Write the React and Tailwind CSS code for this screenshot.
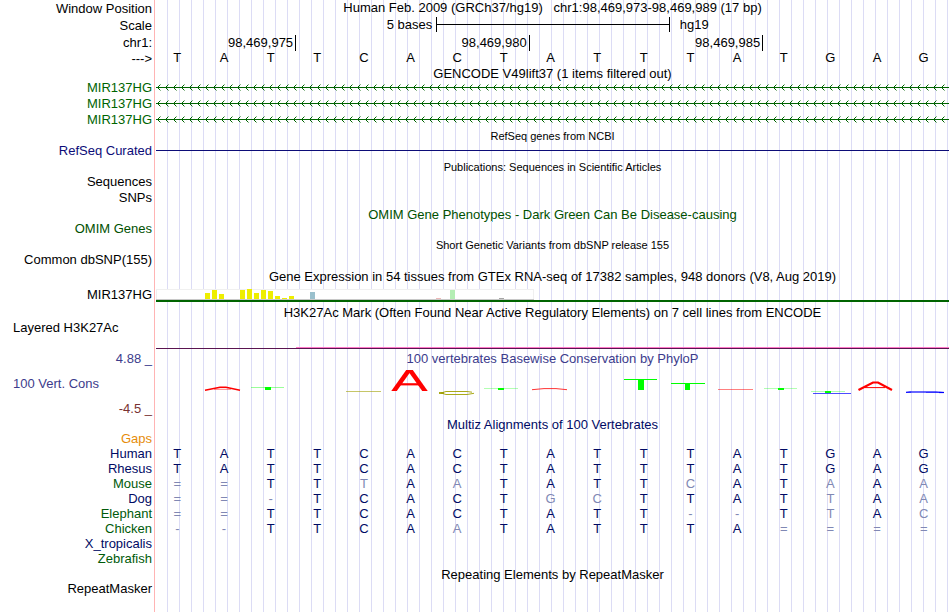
import React from 'react';
import clsx from 'clsx';

const NAVY = 'text-[#000a64]';
const GREEN = 'text-[#005a0a]';

const REFERENCE = 'TATTCACTATTTATGAG';

// lower case = base that differs from the human sequence
const ALIGNMENTS = [
  { species: 'Human', color: NAVY, bases: 'TATTCACTATTTATGAG' },
  { species: 'Rhesus', color: NAVY, bases: 'TATTCACTATTTATGAG' },
  { species: 'Mouse', color: GREEN, bases: '==TTtAaTATTcATaAa' },
  { species: 'Dog', color: NAVY, bases: '==-TCACTgcTTATtAa' },
  { species: 'Elephant', color: GREEN, bases: '==TTCACTATT--TtAc' },
  { species: 'Chicken', color: GREEN, bases: '--TTCAaTATTTA====' },
  { species: 'X_tropicalis', color: NAVY, bases: '' },
  { species: 'Zebrafish', color: GREEN, bases: '' },
];

// GTEx tissues with visible expression, keyed by tissue slot
const TISSUE_COUNT = 54;
const EXPRESSION = {
  7: { height: 6, color: 'bg-[#eeee00]' },
  8: { height: 9, color: 'bg-[#eeee00]' },
  9: { height: 5, color: 'bg-[#eeee00]' },
  12: { height: 9, color: 'bg-[#eeee00]' },
  13: { height: 10, color: 'bg-[#eeee00]' },
  14: { height: 6, color: 'bg-[#eeee00]' },
  15: { height: 9, color: 'bg-[#eeee00]' },
  16: { height: 8, color: 'bg-[#eeee00]' },
  17: { height: 3, color: 'bg-[#eeee00]' },
  18: { height: 1, color: 'bg-[#eeee00]' },
  19: { height: 3, color: 'bg-[#eeee00]' },
  22: { height: 7, color: 'bg-[#9ac0cd]' },
  40: { height: 1, color: 'bg-[#eeb8b8]' },
  42: { height: 9, color: 'bg-[#b4eeb4]' },
  49: { height: 1, color: 'bg-[#a6a6a6]' },
};

const Row = ({ label, labelClass, height, children, className }) => (
  <div className={clsx('flex', height)}>
    <div className={clsx('flex w-[154px] shrink-0 items-center justify-end pr-[2px] whitespace-pre', labelClass)}>
      {label}
    </div>
    <div className="mr-px flex min-w-0 flex-1 border-l border-[#ffb4b4] pl-px">
      <div
        className={clsx(
          'min-w-0 flex-1 bg-[repeating-linear-gradient(to_right,transparent_0px,transparent_11px,#dcdcf5_11px,#dcdcf5_12px)]',
          className
        )}
      >
        {children}
      </div>
    </div>
  </div>
);

const TitleRow = ({ height, color, small, low, children }) => (
  <Row
    height={height}
    className={clsx(
      'flex items-center justify-center whitespace-pre',
      color,
      small && 'text-[11px]',
      (small || low) && 'pt-[2px]'
    )}
  >
    {children}
  </Row>
);

const Bases = ({ bases }) => (
  <div className="-ml-0.5 mr-0.5 grid h-full grid-cols-[repeat(17,minmax(0,1fr))] content-center text-center">
    {bases.split('').map((base, i) => (
      <span key={i} className={/[A-Z]/.test(base) ? undefined : 'text-[#8088b4]'}>
        {base.toUpperCase()}
      </span>
    ))}
  </div>
);

const GeneModel = () => (
  <svg className="block h-[7px] w-full" shapeRendering="crispEdges">
    <defs>
      <pattern id="intron" width="8" height="7" patternUnits="userSpaceOnUse">
        <rect x="0" y="3" width="8" height="1" fill="#006400" />
        <path d="M2 2h1v1H2zM3 1h1v1H3zM2 4h1v1H2zM3 5h1v1H3z" fill="#006400" />
        <path d="M4 0h1v1H4zM4 6h1v1H4z" fill="#006400" opacity="0.45" />
      </pattern>
    </defs>
    <rect width="100%" height="7" fill="url(#intron)" />
  </svg>
);

const Expression = () => (
  <>
    <div className="flex h-[11px] w-[378px] items-end gap-[2px] border-b border-[#c8c8c8] bg-white shadow-[inset_0_1px_#f0f0f0,inset_1px_0_#f0f0f0,inset_-1px_0_#f0f0f0]">
      {Array.from({ length: TISSUE_COUNT }, (_, i) => (
        <div
          key={i}
          className={clsx('w-[5px] shrink-0', EXPRESSION[i]?.color)}
          style={{ height: EXPRESSION[i]?.height ?? 0 }}
        />
      ))}
    </div>
    <div className="h-[2px] bg-[#006400]" />
  </>
);

const Conservation = () => (
  <svg className="block h-[34px] w-full" viewBox="0 1 793 34" preserveAspectRatio="none" fill="none">
    <defs>
      <clipPath id="peak">
        <rect x="230" y="5" width="46" height="21" />
      </clipPath>
    </defs>

    {/* adenine, red */}
    <g stroke="#ff0000">
      <path d="M49 25.2 64 22.2H70L84 25.2" strokeWidth="1.4" />
      <path d="M58 24.3H75" strokeWidth="0.5" />
      <g clipPath="url(#peak)">
        <line x1="236.6" y1="28" x2="254.4" y2="3" strokeWidth="4.5" />
        <line x1="270.4" y1="28" x2="252.6" y2="3" strokeWidth="4.5" />
        <line x1="242" y1="19.3" x2="265" y2="19.3" strokeWidth="2.2" />
      </g>
      <path d="M376 24.7 388 23.6H400L411 24.7" strokeWidth="0.8" />
      <path d="M562 24.5H597" strokeWidth="0.5" />
      <path d="M702.5 25 717 17.5H722L736 25" strokeWidth="2.2" />
      <path d="M709 22.6H729" strokeWidth="1" />
    </g>

    {/* thymine, green */}
    <g fill="#00ff00">
      <rect x="95" y="22" width="33" height="1" opacity="0.4" />
      <rect x="109" y="22" width="6" height="3" />
      <rect x="328" y="23" width="34" height="1" opacity="0.3" />
      <rect x="342" y="23" width="6" height="2" />
      <rect x="468" y="14" width="33" height="1" />
      <rect x="482" y="14" width="6" height="11" />
      <rect x="515" y="18" width="34" height="1" />
      <rect x="529" y="18" width="5" height="7" />
      <rect x="608" y="23" width="33" height="1" opacity="0.3" />
      <rect x="622" y="23" width="6" height="2" />
      <rect x="655" y="26" width="34" height="1" opacity="0.3" />
      <rect x="669" y="26" width="6" height="2" />
    </g>

    {/* cytosine, olive */}
    <g stroke="#a0a000">
      <path d="M190 26.5H225" strokeWidth="0.6" />
      <path d="M316 27.2 311 26.5H290L285 28 290 29.5H311L318 28.3" strokeWidth="0.9" />
      <path d="M283 28H288" strokeWidth="1.8" />
    </g>

    {/* guanine, blue */}
    <g stroke="#0000ff">
      <path d="M657 28.5H695" strokeWidth="0.7" />
      <path d="M788 27.5 780 26.5H754L750 27.5H770" strokeWidth="0.6" />
      <path d="M750 27.2H755M770 27.5H783" strokeWidth="0.8" />
      <path d="M783 27.5H788" strokeWidth="1.2" />
    </g>
  </svg>
);

const App = () => {
  return (
    <main className="flex min-h-screen flex-col bg-white font-['Liberation_Sans',Arial,sans-serif] text-[13px] leading-[15px] text-black">
      {/* Ruler */}
      <Row height="h-[17px]" label="Window Position" className="text-center whitespace-pre">
        {'Human Feb. 2009 (GRCh37/hg19)   chr1:98,469,973-98,469,989 (17 bp)'}
      </Row>
      <Row height="h-[17px]" label="Scale" className="-mr-px grid grid-cols-[repeat(17,minmax(0,1fr))]">
        <span className="col-span-6 pr-1 text-right leading-4">5 bases</span>
        <div className="col-span-5 mb-[2px] flex items-center border-x border-black">
          <div className="h-px flex-1 bg-black" />
        </div>
        <span className="col-span-6 pl-[10px] leading-4">hg19</span>
      </Row>
      <Row height="h-[17px]" label="chr1:" className="-mr-px grid grid-cols-[repeat(17,minmax(0,1fr))] pt-px pb-[2px]">
        <span className="col-span-3 border-r border-black pr-[2px] text-right leading-4">98,469,975</span>
        <span className="col-span-5 border-r border-black pr-[2px] text-right leading-4">98,469,980</span>
        <span className="col-span-5 border-r border-black pr-[2px] text-right leading-4">98,469,985</span>
      </Row>
      <Row height="h-[15px]" label="--->" className="pb-[2px]">
        <Bases bases={REFERENCE} />
      </Row>

      {/* GENCODE */}
      <TitleRow height="h-[14px]">GENCODE V49lift37 (1 items filtered out)</TitleRow>
      <Row height="h-[15px]" label="MIR137HG" labelClass="text-[#006400]" className="pt-[4px]">
        <GeneModel />
      </Row>
      <Row height="h-[16px]" label="MIR137HG" labelClass="text-[#006400]" className="pt-[5px]">
        <GeneModel />
      </Row>
      <Row height="h-[16px]" label="MIR137HG" labelClass="text-[#006400]" className="pt-[5px]">
        <GeneModel />
      </Row>

      {/* RefSeq */}
      <TitleRow height="h-[16px]" small>RefSeq genes from NCBI</TitleRow>
      <Row height="h-[15px]" label="RefSeq Curated" labelClass="text-[#0c0c78]" className="flex items-center">
        <div className="h-px flex-1 bg-[#0c0c78]" />
      </Row>

      {/* Publications */}
      <TitleRow height="h-[16px]" small>Publications: Sequences in Scientific Articles</TitleRow>
      <Row height="h-[15px]" label="Sequences" />
      <Row height="h-[16px]" label="SNPs" />

      {/* Variants */}
      <TitleRow height="h-[16px]" color="text-[#005000]" low>
        OMIM Gene Phenotypes - Dark Green Can Be Disease-causing
      </TitleRow>
      <Row height="h-[15px]" label="OMIM Genes" labelClass="text-[#005000]" />
      <TitleRow height="h-[16px]" small>Short Genetic Variants from dbSNP release 155</TitleRow>
      <Row height="h-[15px]" label="Common dbSNP(155)" />

      {/* Expression and regulation */}
      <TitleRow height="h-[17px]" low>
        Gene Expression in 54 tissues from GTEx RNA-seq of 17382 samples, 948 donors (V8, Aug 2019)
      </TitleRow>
      <Row height="h-[20px]" label="MIR137HG" className="flex flex-col justify-end pb-[2px]">
        <Expression />
      </Row>
      <TitleRow height="h-[16px]">
        H3K27Ac Mark (Often Found Near Active Regulatory Elements) on 7 cell lines from ENCODE
      </TitleRow>
      <Row
        height="h-[30px]"
        label={<span className="w-full self-start pl-[13px]">Layered H3K27Ac</span>}
        className="flex flex-col items-end justify-end pb-px"
      >
        <div className="h-px w-14/17 bg-[#ff78c8]" />
        <div className="h-px w-full bg-[#5a1450]" />
      </Row>

      {/* Conservation */}
      <Row
        height="h-[16px]"
        label="4.88 _"
        labelClass="text-[#3c3c8c]"
        className="flex items-center justify-center text-[#3c3c8c]"
      >
        100 vertebrates Basewise Conservation by PhyloP
      </Row>
      <Row
        height="h-[34px]"
        label={<span className="w-full pl-[13px]">100 Vert. Cons</span>}
        labelClass="text-[#3c3c8c]"
      >
        <Conservation />
      </Row>
      <Row height="h-[16px]" label="-4.5 _" labelClass="text-[#783232]" />

      {/* Multiz alignments */}
      <TitleRow height="h-[15px]" color={NAVY} low>Multiz Alignments of 100 Vertebrates</TitleRow>
      <Row height="h-[15px]" label="Gaps" labelClass="text-[#e68c0a]" />
      {ALIGNMENTS.map(({ species, color, bases }) => (
        <Row key={species} height="h-[15px]" label={species} labelClass={color} className={NAVY}>
          {bases && <Bases bases={bases} />}
        </Row>
      ))}

      {/* Repeats */}
      <TitleRow height="h-[15px]" low>Repeating Elements by RepeatMasker</TitleRow>
      <Row height="h-[14px]" label="RepeatMasker" />
      <Row height="min-h-4 flex-1" />
    </main>
  );
};

export default App;
